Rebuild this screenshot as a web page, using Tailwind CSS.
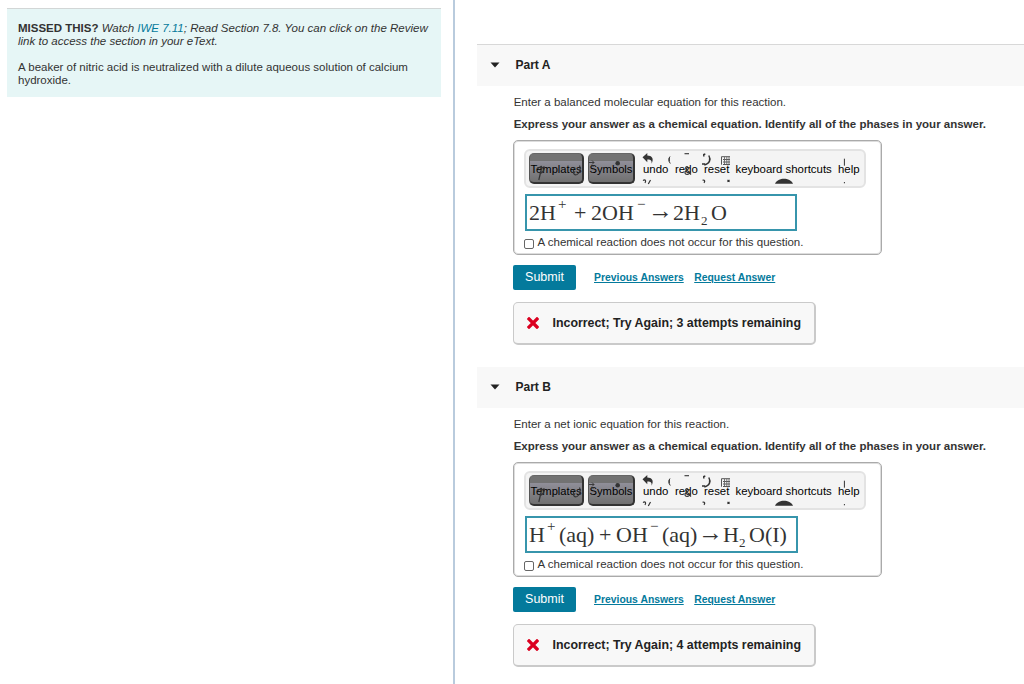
<!DOCTYPE html>
<html lang="en">
<head>
    <meta charset="UTF-8">
    <meta name="viewport" content="width=device-width, initial-scale=1.0">
    <title>Neutralization Reaction</title>
    <script src="https://cdn.jsdelivr.net/npm/@tailwindcss/browser@4"></script>
</head>
<body class="bg-white text-[#333] font-['Liberation_Sans',Arial,sans-serif] text-[11.5px] overflow-hidden">
    <div class="flex h-[684px] w-[1024px] overflow-hidden">
        <aside class="w-[455px] shrink-0 border-r-2 border-[#b9cbdd] pt-2 pl-[7px]">
            <div class="w-[434px] h-[89px] bg-[#e6f6f6] border-t border-[#d2d6d6] pl-[11px] pt-[13px] leading-[13px] whitespace-nowrap">
                <p><b>MISSED THIS?</b> <i>Watch <a class="text-[#047a9c]">IWE 7.11</a>; Read Section 7.8. You can click on the Review<br>link to access the section in your eText.</i></p>
                <p class="mt-[13px]">A beaker of nitric acid is neutralized with a dilute aqueous solution of calcium<br>hydroxide.</p>
            </div>
        </aside>
        <main id="parts" class="grow pl-[22px] pt-11 whitespace-nowrap"></main>
    </div>

    <!-- toolbar artwork that shows behind and over the labels -->
    <svg class="hidden">
        <symbol id="toolbar-art" viewBox="0 0 342 39">
            <g fill="none" stroke="#333" stroke-width="1.2">
                <path d="M16 18.500c1-1.500 2-1.500 1.600.5l-2.800 12M17 21c2-4.500 4.500-4 3-.5-.8 2.500-2.800 4.500-4.500 3M13.800 19.500l2-1.500"/>
                <path d="M49.500 21c-.5 4 1 5.500 3.500 4.500 3-1.500 4-6 2.500-9M50 20l1-1.500"/>
                <path d="M65 13.500h5M68 11.500l2 2-2 2M67 17h3" stroke-width=".9"/>
                <path d="M146 7.500c-1.600 2-1.600 4.500.3 7M145.300 9v3.500" stroke-width="1"/>
                <path d="M160.500 4.700h4.500" stroke-width="1.100"/>
                <path d="M167 25.500l-5-5.500c-1-1.500.3-2.700 1.600-2.100 1.700 1 .7 2.500-1.200 3.600-2.600 1.700-1.400 4 .8 3.900 1.800 0 2.800-1.500 3.300-3"/>
                <path d="M179.800 7.500v-2l1.500-.5M184.800 6.500c2.300 4 1 8-4.500 9.500M178 15h3" stroke-width="1.500"/>
                <path d="M119 31.500c2-1.500 3.500 0 2 2.500M126.500 31l-2.200 4M178.500 31.300c2-.7 3 .5 1.500 2.500M203.500 31l2 1.700M205.500 31l-2 1.700" stroke-width="1.200"/>
                <path d="M320.400 9.700v7M320.400 33v1.300" stroke-width="1"/>
                <path d="M197.500 15.700v-8h8.500M199 10.500h7M199 13h7M199 15.500h7" stroke="#555" stroke-width="1"/>
                <path d="M200.500 8v7M202.800 8v7M205 8v7" stroke="#666" stroke-width=".9"/>
            </g>
            <g fill="#333">
                <path d="M118.500 8.300l4.800-4.300v2.600c4.500 0 7 3 4.300 8.200.3-3.200-.8-4.300-4.300-4.200v2.600z"/>
                <circle cx="93.700" cy="14.200" r="2.300"/>
                <path d="M251 34.700c3-6.500 15-6.500 18 0z"/>
            </g>
        </symbol>
    </svg>

    <script>
        const parts = [
            {
                name: 'Part A',
                line: 'border-[#d8d8d8]',
                prompt: 'Enter a balanced molecular equation for this reaction.',
                attempts: 3,
                fieldWidth: 'w-[272px]',
                equation: `
                    <span class="w-[29px]">2H</span>
                    <span class="w-4 text-[15px] -mt-4">+</span>
                    <span class="w-[17px]">+</span>
                    <span class="w-[46px]">2OH</span>
                    <span class="w-[11px] text-[15px] -mt-4">−</span>
                    <span class="w-[25px] text-[25px] leading-none -mt-1">→</span>
                    <span class="w-7">2H</span>
                    <span class="w-2.5 text-[13px] mt-[17px]">2</span>
                    <span>O</span>`
            },
            {
                name: 'Part B',
                line: 'border-white',
                prompt: 'Enter a net ionic equation for this reaction.',
                attempts: 4,
                fieldWidth: 'w-[273px]',
                equation: `
                    <span class="w-[18px]">H</span>
                    <span class="w-3 text-[15px] -mt-4">+</span>
                    <span class="w-10">(aq)</span>
                    <span class="w-[17px]">+</span>
                    <span class="w-[34px]">OH</span>
                    <span class="w-3 text-[15px] -mt-4">−</span>
                    <span class="w-[36px]">(aq)</span>
                    <span class="w-[25px] text-[25px] leading-none -mt-1">→</span>
                    <span class="w-4">H</span>
                    <span class="w-2.5 text-[13px] mt-[17px]">2</span>
                    <span>O(I)</span>`
            }
        ];

        document.getElementById('parts').innerHTML = parts.map(part => `
            <section class="h-[322px]">
                <header class="h-[42px] bg-[#f8f8f8] bg-clip-padding border-t ${part.line} flex items-center pl-[13px] pb-0.5 text-[12px] font-bold text-[#222]">
                    <svg class="w-[10px] h-[6px] mr-[15.5px]" viewBox="0 0 10 6"><path d="M.5.5h9L5 5.500z" fill="#222"/></svg>
                    <h2>${part.name}</h2>
                </header>
                <div class="pl-9">
                    <p class="h-[22px] mt-1.5 ml-[.7px] leading-[21px]">${part.prompt}</p>
                    <p class="h-[21px] ml-[.7px] leading-[21px] font-bold">Express your answer as a chemical equation. Identify all of the phases in your answer.</p>
                    <div class="w-[369px] h-[115px] mt-[5px] border border-[#aaa] shadow-[inset_0_0_0_1px_#ddd] rounded-[5px] pl-[10px] pt-2">
                        <div class="relative w-[342px] h-[39px] bg-[#f4f4f4] border-2 border-[#e3e3e3] rounded-[6px] flex items-center pl-[3px] text-[11.4px] text-black">
                            <button class="w-[55px] h-[31px] rounded-[5px] border border-r-2 border-b-2 border-t-[#666] border-l-[#555] border-r-[#333] border-b-[#333] bg-linear-to-b from-[#727272] from-25% via-[#908f99] via-25% to-[#707070] text-[11.2px] text-center pt-0.5">Templates</button>
                            <button class="w-[47px] h-[31px] ml-1 rounded-[5px] border border-r-2 border-b-2 border-t-[#666] border-l-[#555] border-r-[#333] border-b-[#333] bg-linear-to-b from-[#727272] from-25% via-[#908f99] via-25% to-[#707070] text-[11.2px] text-center pt-0.5">Symbols</button>
                            <span class="w-8 ml-2 pt-0.5">undo</span>
                            <span class="w-[29px] pt-0.5">redo</span>
                            <span class="w-[31.5px] pt-0.5">reset</span>
                            <span class="w-[102.5px] pt-0.5">keyboard shortcuts</span>
                            <span class="pt-0.5">help</span>
                            <svg class="absolute -left-0.5 -top-0.5 w-[342px] h-[39px]"><use href="#toolbar-art"/></svg>
                        </div>
                        <div class="${part.fieldWidth} h-[37px] mt-1.5 ml-px border-2 border-[#3795ac] pl-0.5 flex items-center font-['Liberation_Serif',serif] text-[22px] text-[#333]">${part.equation}
                        </div>
                        <label class="flex items-center h-[21px] mt-px">
                            <span class="w-[10px] h-[10px] border border-[#666] rounded-[2px] mt-0.5 mr-[3.5px]"></span>
                            A chemical reaction does not occur for this question.
                        </label>
                    </div>
                    <div class="flex items-center mt-2.5 h-[25px] text-[10.4px] font-bold text-[#047a9c]">
                        <button class="w-[63px] h-[25px] bg-[#047a9c] text-white rounded-[2px] text-[12.5px] font-normal mr-[18px] pb-px">Submit</button>
                        <a class="underline underline-offset-1 mr-[10.5px]">Previous Answers</a>
                        <a class="underline underline-offset-1">Request Answer</a>
                    </div>
                    <div class="w-[303px] h-[43px] mt-3 bg-[#f8f8f8] border border-b-2 border-r-2 border-[#cacaca] rounded-[5px] flex items-center pl-[13px] text-[12.38px] font-bold text-[#222]">
                        <svg class="w-[12px] h-[12px] mr-[13.5px]" viewBox="0 0 12 12"><path d="M2 2l8 8M10 2l-8 8" stroke="#db0020" stroke-width="3.300" stroke-linecap="square"/></svg>
                        Incorrect; Try Again; ${part.attempts} attempts remaining
                    </div>
                </div>
            </section>
        `).join('');
    </script>
</body>
</html>
